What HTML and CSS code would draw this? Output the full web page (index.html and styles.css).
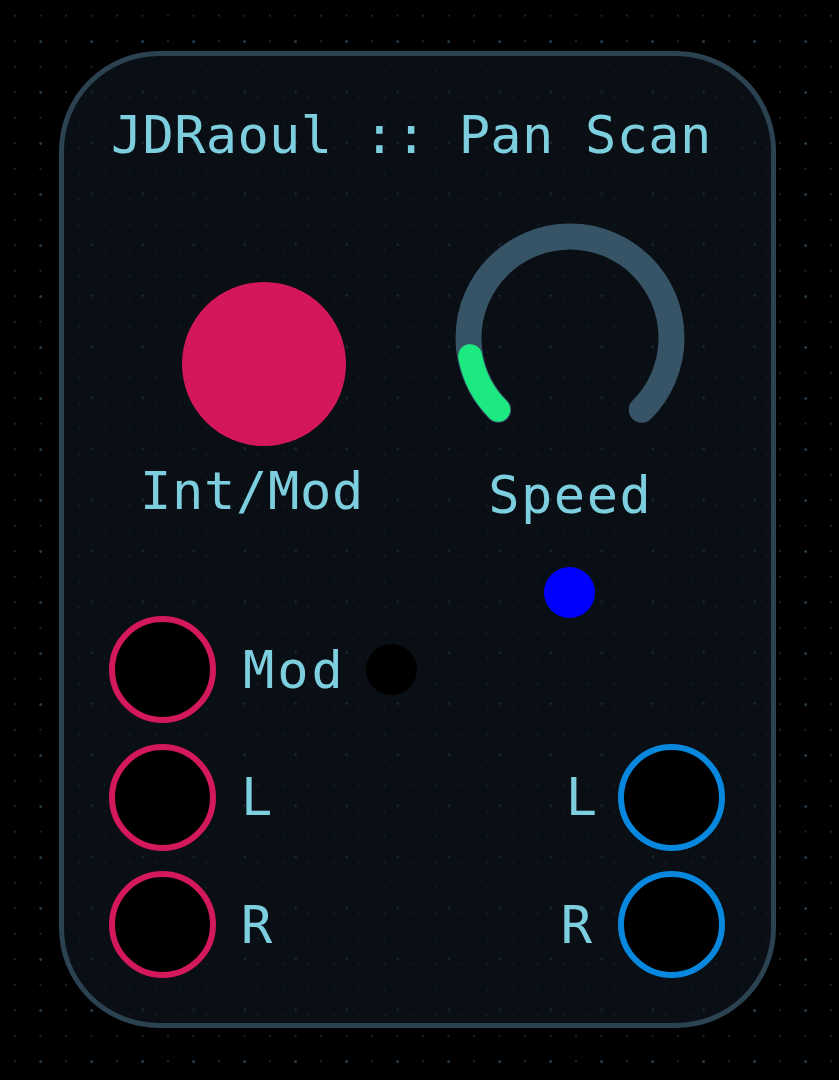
FILE: index.html
```html
<!DOCTYPE html>
<html>
<head>
<meta charset="utf-8">
<link rel="stylesheet" href="styles.css">
</head>
<body>
<div class="panel">
  <div class="title">JDRaoul :: Pan Scan</div>
  <div class="knobs">
    <div class="col col-left">
      <div class="big-knob"></div>
      <div class="label label-intmod">Int/Mod</div>
    </div>
    <div class="col col-right">
      <svg class="dial" width="240" height="220" viewBox="0 0 240 220">
        <path d="M 48.23 187.77 A 101.5 101.5 0 1 1 191.77 187.77" stroke="#375466" stroke-width="26" fill="none" stroke-linecap="round"/>
        <path d="M 48.23 187.77 A 101.5 101.5 0 0 1 20.14 134.15" stroke="#1de981" stroke-width="24" fill="none" stroke-linecap="round"/>
      </svg>
      <div class="label label-speed">Speed</div>
      <div class="led"></div>
    </div>
  </div>
  <div class="jack-row row-mod">
    <div class="jack jack-in"></div>
    <div class="label jl label-mod">Mod</div>
    <div class="dot"></div>
  </div>
  <div class="jack-row">
    <div class="jack jack-in"></div>
    <div class="label jl">L</div>
    <div class="spacer"></div>
    <div class="label jr">L</div>
    <div class="jack jack-out"></div>
  </div>
  <div class="jack-row">
    <div class="jack jack-in"></div>
    <div class="label jl">R</div>
    <div class="spacer"></div>
    <div class="label jr jr-r">R</div>
    <div class="jack jack-out"></div>
  </div>
</div>
</body>
</html>
```
FILE: styles.css
```css
html, body {
  margin: 0;
  padding: 0;
}
body {
  width: 839px;
  height: 1080px;
  overflow: hidden;
  background-color: #000;
  background-image:
    radial-gradient(circle, #2e4757 0.9px, transparent 1.5px),
    radial-gradient(circle, #18252e 0.9px, transparent 1.5px);
  background-size: 51px 51px, 25.5px 25.5px;
  background-position: 15.2px 16.2px, 2.25px 2.95px;
  font-family: "DejaVu Sans Mono", "Liberation Mono", monospace;
  color: #7dcfdf;
}
.panel {
  box-sizing: border-box;
  margin-left: 59px;
  margin-top: 51px;
  width: 717px;
  height: 977px;
  border: 5px solid #2b4251;
  border-radius: 100px;
  background-color: #0a0f15;
  background-image:
    radial-gradient(circle, #1b2a34 0.9px, transparent 1.5px),
    radial-gradient(circle, #121c23 0.9px, transparent 1.5px);
  background-size: 51px 51px, 25.5px 25.5px;
  background-position: -48.8px -40.8px, 2.25px 2.95px;
  padding: 49px 46px 0 45px;
}
.title {
  font-size: 52px;
  line-height: 60px;
  height: 60px;
  white-space: nowrap;
  letter-spacing: 0.3px;
  padding-left: 2px;
}
.label {
  font-size: 52px;
  line-height: 60px;
  height: 60px;
  white-space: nowrap;
}
.knobs {
  display: flex;
  align-items: flex-start;
  padding-left: 28px;
  gap: 82.5px;
}
.col {
  display: flex;
  flex-direction: column;
}
.col-left {
  align-items: flex-start;
  width: 230px;
}
.big-knob {
  width: 164px;
  height: 164px;
  border-radius: 50%;
  background: #d3175a;
  margin-top: 117px;
  margin-left: 45px;
}
.label-intmod {
  margin-top: 15px;
  margin-left: 3px;
  letter-spacing: 0.7px;
}
.col-right {
  align-items: center;
  width: 240px;
}
.dial {
  display: block;
  margin-top: 57px;
}
.label-speed {
  margin-top: 23px;
  letter-spacing: 1.5px;
  padding-left: 1.5px;
}
.led {
  width: 51px;
  height: 51px;
  border-radius: 50%;
  background: #0000ff;
  margin-top: 42px;
}
.jack-row {
  display: flex;
  align-items: center;
  height: 107px;
  margin-top: 20.5px;
}
.jack-row.row-mod {
  margin-top: -2px;
}
.jack {
  box-sizing: border-box;
  width: 107px;
  height: 107px;
  border-radius: 50%;
  background: #000;
  border: 6px solid;
}
.jack-in {
  border-color: #d3185b;
}
.jack-out {
  border-color: #0788de;
}
.jl {
  margin-left: 25px;
}
.label-mod {
  margin-left: 27px;
  letter-spacing: 3px;
}
.jr {
  margin-right: 21px;
}
.jr-r {
  margin-right: 26px;
}
.spacer {
  flex: 1;
}
.dot {
  width: 51px;
  height: 51px;
  border-radius: 50%;
  background: #000;
  margin-left: 20px;
}
```
